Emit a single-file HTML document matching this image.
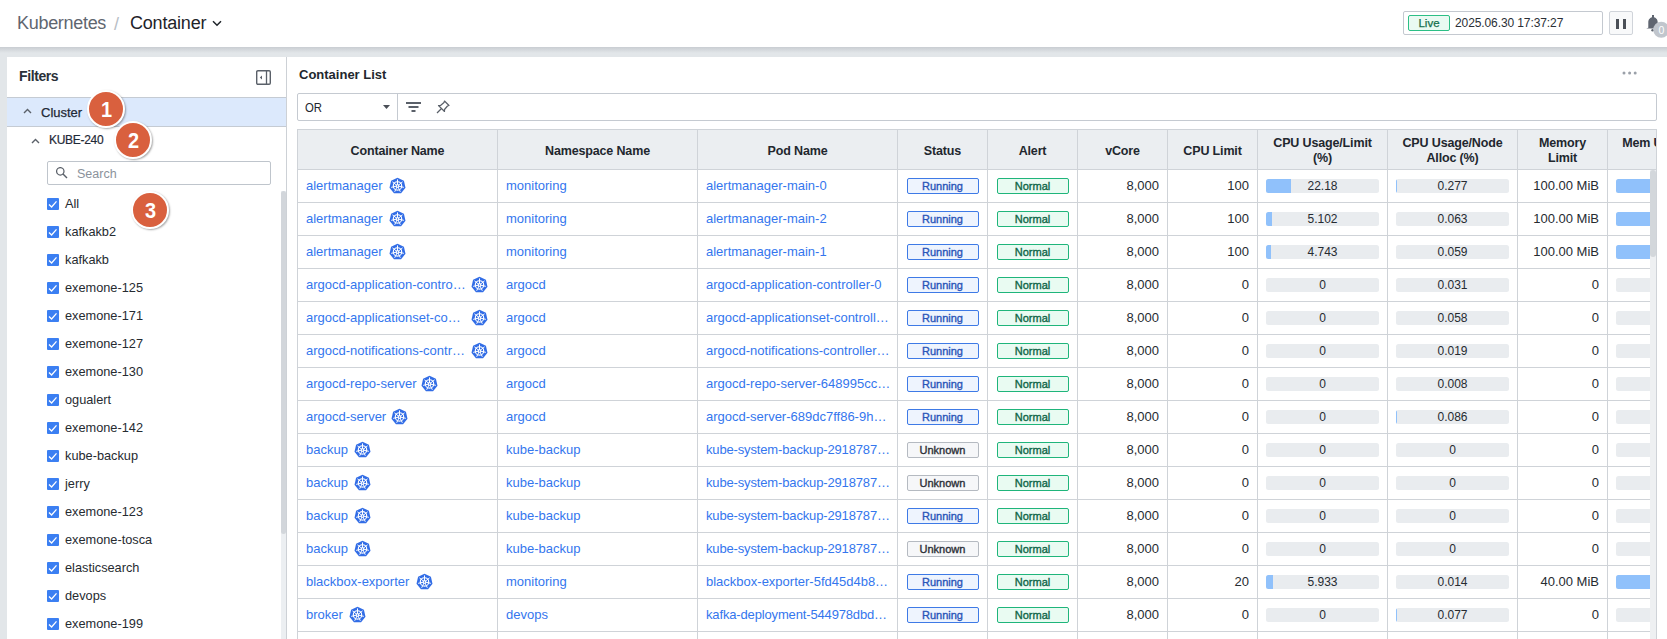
<!DOCTYPE html><html><head><meta charset="utf-8"><style>
*{box-sizing:border-box;margin:0;padding:0}
html,body{width:1667px;height:639px;overflow:hidden}
body{background:#e2e6e9;font-family:"Liberation Sans",sans-serif;color:#212529;position:relative}
.hdr{position:absolute;left:0;top:0;width:1667px;height:47px;background:#fff;box-shadow:0 1px 2px rgba(0,0,0,.12)}
.shadow{position:absolute;left:0;top:47px;width:1667px;height:6px;background:linear-gradient(#c9cdd2,#e2e6e9)}
.crumb1{position:absolute;left:17px;top:13px;font-size:18px;color:#5f6670;letter-spacing:-0.3px}
.crumbsep{position:absolute;left:114px;top:14px;font-size:18px;color:#b8bec6}
.crumb2{position:absolute;left:130px;top:13px;font-size:18px;color:#1e2329;letter-spacing:-0.2px}
.chev{position:absolute;left:212px;top:20px}
.timebox{position:absolute;left:1403px;top:11px;width:200px;height:24px;border:1px solid #c4c9d0;border-radius:2px;background:#fff}
.live{position:absolute;left:4px;top:3px;width:42px;height:16px;border:1px solid #2cbf86;border-radius:2px;background:#e9faf2;color:#15704d;font-size:11.5px;line-height:14px;text-align:center;-webkit-text-stroke:0.25px #15704d}
.date{position:absolute;left:51px;top:4px;font-size:12px;color:#2a2f36;line-height:14px;letter-spacing:-0.1px}
.pause{position:absolute;left:1609px;top:11px;width:24px;height:24px;border:1px solid #d0d4da;border-radius:2px;background:#f8f9fa}
.pause i{position:absolute;top:7px;width:3px;height:10px;background:#4a4f57}
.left{position:absolute;left:7px;top:57px;width:280px;height:582px;background:#fff;border-right:1px solid #cdd1d6}
.right{position:absolute;left:287px;top:57px;width:1380px;height:582px;background:#fff}
.ftitle{position:absolute;left:12px;top:11px;font-size:14px;letter-spacing:-0.4px;font-weight:bold;color:#2a3039}
.collapse{position:absolute;left:248.5px;top:12.5px}
.clrow{position:absolute;left:0;top:40px;width:279px;height:30px;background:#dce9fc;border-top:1px solid #c5cbd3;border-bottom:1px solid #c5cbd3}
.cltxt{position:absolute;left:34px;top:6.5px;font-size:13px;-webkit-text-stroke:0.25px #1f2a37;color:#1f2a37}
.kube{position:absolute;left:42px;top:76px;font-size:12px;color:#1f2a37;letter-spacing:-0.3px;-webkit-text-stroke:0.2px #1f2a37}
.search{position:absolute;left:40px;top:104px;width:224px;height:24px;border:1px solid #bfc5cc;border-radius:2px}
.search span{position:absolute;left:29px;top:5px;font-size:12.5px;color:#8b929b}
.cb{position:absolute;left:40px;width:12px;height:12px;background:#3b7ff2;border-radius:1px}
.cbl{position:absolute;left:58px;font-size:12.75px;color:#262b31}
.sbtrack{position:absolute;left:274px;top:134px;width:5px;height:448px;background:#eceff2}
.sbthumb{position:absolute;left:274px;top:134px;width:5px;height:343px;background:#d2d6db;border-radius:3px}
.badge{position:absolute;width:38px;height:38px;border-radius:50%;background:#d9603e;border:2.5px solid #fff;box-shadow:1px 1px 2px rgba(0,0,0,.35);color:#fff;font-weight:bold;font-size:21px;text-align:center;line-height:33px}
.badge span{display:inline-block;transform:translateX(0.8px) scale(0.95,1.08)}
.ctitle{position:absolute;left:12px;top:10px;font-size:13px;font-weight:bold;color:#22272e}
.dots{position:absolute;left:1335px;top:14px}
.fbar{position:absolute;left:10px;top:36px;width:1360px;height:28px;border:1px solid #c5cad1;border-radius:2px}
.ortxt{position:absolute;left:7px;top:6px;font-size:13px;color:#22272e;transform:scaleX(0.87);transform-origin:0 0}
.ordiv{position:absolute;left:99px;top:0;width:1px;height:26px;background:#c5cad1}
.tbl{position:absolute;left:10px;top:72px;width:1360px;height:510px;overflow:hidden;border-right:1px solid #cfd3d8}
table{border-collapse:collapse;table-layout:fixed;font-size:13px;width:1440px}
th{background:#ebeef1;border:1px solid #cfd3d8;height:40px;font-weight:bold;color:#22272e;font-size:12.5px;line-height:15px;text-align:center;padding:0 2px;letter-spacing:-0.15px}
td{border:1px solid #cfd3d8;height:33px;padding:0 8px 2px 8px;white-space:nowrap;overflow:hidden;position:relative;color:#262b31}
td.l{color:#3476ee}
td.r{text-align:right}
td.c{text-align:center;padding:0}
.k8s{position:absolute;top:7px}
.nm{display:inline-block;margin-right:6px}
th.nw{white-space:nowrap;text-align:left;padding-left:13px}
.st{display:inline-block;width:72px;height:16px;border:1px solid;border-radius:2px;font-size:11px;line-height:14px;text-align:center;vertical-align:middle;-webkit-text-stroke:0.35px currentColor}
.run{background:#eef4fe;border-color:#3e7ae6;color:#2a55b8}
.unk{background:#f6f7f9;border-color:#b5bac1;color:#2b2f36}
.nor{background:#e9fbf2;border-color:#1fb57b;color:#0f6647}
.bar{position:absolute;left:8px;top:8.5px;height:14px;background:#e9ecef;border-radius:2.5px;overflow:hidden;text-align:center;font-size:12px;line-height:14px;color:#262b31}
.bar i{position:absolute;left:0;top:0;height:14px;background:#90c1fb}
.bar b{position:relative;font-weight:normal}
.tsb{position:absolute;left:1363px;top:113px;width:6px;height:470px;background:#eef0f2}
.tsbt{position:absolute;left:1363px;top:113px;width:6px;height:87px;background:#d3d7db;border-radius:3px}
</style></head><body>
<div class="hdr">
<div class="crumb1">Kubernetes</div><div class="crumbsep">/</div><div class="crumb2">Container</div>
<svg class="chev" width="10" height="7" viewBox="0 0 10 7"><path d="M1 1.2 L5 5.2 L9 1.2" fill="none" stroke="#1e2329" stroke-width="1.5"/></svg>
<div class="timebox"><div class="live">Live</div><div class="date">2025.06.30 17:37:27</div></div>
<div class="pause"><i style="left:6px"></i><i style="left:13px"></i></div>
<svg style="position:absolute;left:1644px;top:13px" width="23" height="26" viewBox="0 0 23 26"><rect x="8" y="2" width="2" height="3" fill="#5f6570"/><path d="M4.3 14.8 V9.2 C4.3 6.2 6.3 4.2 9 4.2 C11.7 4.2 13.7 6.2 13.7 9.2 V14.8 L15.8 15.6 H2.2 Z" fill="#5f6570"/><circle cx="8.6" cy="17.3" r="1.3" fill="#5f6570"/><circle cx="17.25" cy="16.75" r="8" fill="#c1c6cd"/><text x="17.3" y="20.5" font-size="10.5" fill="#fff" text-anchor="middle" font-family="Liberation Sans">0</text></svg>
</div><div class="shadow"></div>
<div class="left">
<div class="ftitle">Filters</div>
<svg class="collapse" width="15" height="15" viewBox="0 0 15 15"><rect x="0.7" y="0.7" width="13.6" height="13.6" rx="1.2" fill="none" stroke="#5a6069" stroke-width="1.4"/><path d="M10.5 1 V14" stroke="#5a6069" stroke-width="1.3"/><path d="M6 5.6 L3.8 7.5 L6 9.4 Z" fill="#5a6069"/></svg>
<div class="clrow"><svg style="position:absolute;left:16px;top:10px" width="9" height="6" viewBox="0 0 9 6"><path d="M1 5 L4.5 1.5 L8 5" fill="none" stroke="#5a6069" stroke-width="1.4"/></svg><div class="cltxt">Cluster</div></div>
<svg style="position:absolute;left:24px;top:81px" width="9" height="6" viewBox="0 0 9 6"><path d="M1 5 L4.5 1.5 L8 5" fill="none" stroke="#5a6069" stroke-width="1.4"/></svg><div class="kube">KUBE-240</div>
<div class="search"><svg style="position:absolute;left:8px;top:5px" width="13" height="13" viewBox="0 0 13 13"><circle cx="4.3" cy="4.3" r="3.7" fill="none" stroke="#5a6069" stroke-width="1.25"/><path d="M7 7 L11 11.1" stroke="#5a6069" stroke-width="1.4"/></svg><span>Search</span></div>
<div class="cb" style="top:141px"><svg width="12" height="12" viewBox="0 0 12 12" style="position:absolute;left:0;top:0"><path d="M2 6.5 L4.6 9 L9.5 3.3" fill="none" stroke="#fff" stroke-width="1.3"/></svg></div><div class="cbl" style="top:139px">All</div>
<div class="cb" style="top:169px"><svg width="12" height="12" viewBox="0 0 12 12" style="position:absolute;left:0;top:0"><path d="M2 6.5 L4.6 9 L9.5 3.3" fill="none" stroke="#fff" stroke-width="1.3"/></svg></div><div class="cbl" style="top:167px">kafkakb2</div>
<div class="cb" style="top:197px"><svg width="12" height="12" viewBox="0 0 12 12" style="position:absolute;left:0;top:0"><path d="M2 6.5 L4.6 9 L9.5 3.3" fill="none" stroke="#fff" stroke-width="1.3"/></svg></div><div class="cbl" style="top:195px">kafkakb</div>
<div class="cb" style="top:225px"><svg width="12" height="12" viewBox="0 0 12 12" style="position:absolute;left:0;top:0"><path d="M2 6.5 L4.6 9 L9.5 3.3" fill="none" stroke="#fff" stroke-width="1.3"/></svg></div><div class="cbl" style="top:223px">exemone-125</div>
<div class="cb" style="top:253px"><svg width="12" height="12" viewBox="0 0 12 12" style="position:absolute;left:0;top:0"><path d="M2 6.5 L4.6 9 L9.5 3.3" fill="none" stroke="#fff" stroke-width="1.3"/></svg></div><div class="cbl" style="top:251px">exemone-171</div>
<div class="cb" style="top:281px"><svg width="12" height="12" viewBox="0 0 12 12" style="position:absolute;left:0;top:0"><path d="M2 6.5 L4.6 9 L9.5 3.3" fill="none" stroke="#fff" stroke-width="1.3"/></svg></div><div class="cbl" style="top:279px">exemone-127</div>
<div class="cb" style="top:309px"><svg width="12" height="12" viewBox="0 0 12 12" style="position:absolute;left:0;top:0"><path d="M2 6.5 L4.6 9 L9.5 3.3" fill="none" stroke="#fff" stroke-width="1.3"/></svg></div><div class="cbl" style="top:307px">exemone-130</div>
<div class="cb" style="top:337px"><svg width="12" height="12" viewBox="0 0 12 12" style="position:absolute;left:0;top:0"><path d="M2 6.5 L4.6 9 L9.5 3.3" fill="none" stroke="#fff" stroke-width="1.3"/></svg></div><div class="cbl" style="top:335px">ogualert</div>
<div class="cb" style="top:365px"><svg width="12" height="12" viewBox="0 0 12 12" style="position:absolute;left:0;top:0"><path d="M2 6.5 L4.6 9 L9.5 3.3" fill="none" stroke="#fff" stroke-width="1.3"/></svg></div><div class="cbl" style="top:363px">exemone-142</div>
<div class="cb" style="top:393px"><svg width="12" height="12" viewBox="0 0 12 12" style="position:absolute;left:0;top:0"><path d="M2 6.5 L4.6 9 L9.5 3.3" fill="none" stroke="#fff" stroke-width="1.3"/></svg></div><div class="cbl" style="top:391px">kube-backup</div>
<div class="cb" style="top:421px"><svg width="12" height="12" viewBox="0 0 12 12" style="position:absolute;left:0;top:0"><path d="M2 6.5 L4.6 9 L9.5 3.3" fill="none" stroke="#fff" stroke-width="1.3"/></svg></div><div class="cbl" style="top:419px">jerry</div>
<div class="cb" style="top:449px"><svg width="12" height="12" viewBox="0 0 12 12" style="position:absolute;left:0;top:0"><path d="M2 6.5 L4.6 9 L9.5 3.3" fill="none" stroke="#fff" stroke-width="1.3"/></svg></div><div class="cbl" style="top:447px">exemone-123</div>
<div class="cb" style="top:477px"><svg width="12" height="12" viewBox="0 0 12 12" style="position:absolute;left:0;top:0"><path d="M2 6.5 L4.6 9 L9.5 3.3" fill="none" stroke="#fff" stroke-width="1.3"/></svg></div><div class="cbl" style="top:475px">exemone-tosca</div>
<div class="cb" style="top:505px"><svg width="12" height="12" viewBox="0 0 12 12" style="position:absolute;left:0;top:0"><path d="M2 6.5 L4.6 9 L9.5 3.3" fill="none" stroke="#fff" stroke-width="1.3"/></svg></div><div class="cbl" style="top:503px">elasticsearch</div>
<div class="cb" style="top:533px"><svg width="12" height="12" viewBox="0 0 12 12" style="position:absolute;left:0;top:0"><path d="M2 6.5 L4.6 9 L9.5 3.3" fill="none" stroke="#fff" stroke-width="1.3"/></svg></div><div class="cbl" style="top:531px">devops</div>
<div class="cb" style="top:561px"><svg width="12" height="12" viewBox="0 0 12 12" style="position:absolute;left:0;top:0"><path d="M2 6.5 L4.6 9 L9.5 3.3" fill="none" stroke="#fff" stroke-width="1.3"/></svg></div><div class="cbl" style="top:559px">exemone-199</div>
<div class="sbtrack"></div><div class="sbthumb"></div>
</div>
<div class="right">
<div class="ctitle">Container List</div>
<svg class="dots" width="16" height="4" viewBox="0 0 16 4"><circle cx="2" cy="2" r="1.5" fill="#9ba1a9"/><circle cx="7.6" cy="2" r="1.5" fill="#9ba1a9"/><circle cx="13.2" cy="2" r="1.5" fill="#9ba1a9"/></svg>
<div class="fbar"><div class="ortxt">OR</div><svg style="position:absolute;left:85px;top:11px" width="7" height="4" viewBox="0 0 7 4"><path d="M0 0 H7 L3.5 4 Z" fill="#4a4f57"/></svg><div class="ordiv"></div>
<svg style="position:absolute;left:107px;top:7px" width="17" height="12" viewBox="0 0 17 12"><path d="M1 2 H16 M3.5 6 H13.5 M6.5 10 H10.5" stroke="#5a6069" stroke-width="1.8"/></svg>
<svg style="position:absolute;left:138px;top:6px" width="14" height="14" viewBox="0 0 14 14"><g fill="none" stroke="#5a6069" stroke-width="1.2" stroke-linejoin="round"><path d="M8.5 1 L13 5.5 L11.5 6 L8.5 9.5 L8.5 11.5 L2.5 5.5 L4.5 5.5 L8 2.5 Z"/><path d="M5.5 8.5 L1 13"/></g></svg>
</div>
<div class="tbl"><table><colgroup><col style="width:200px"><col style="width:200px"><col style="width:200px"><col style="width:90px"><col style="width:90px"><col style="width:90px"><col style="width:90px"><col style="width:130px"><col style="width:130px"><col style="width:90px"><col style="width:130px"></colgroup>
<tr><th style="padding-top:3px">Container Name</th><th style="padding-top:3px">Namespace Name</th><th style="padding-top:3px">Pod Name</th><th style="padding-top:3px">Status</th><th style="padding-top:3px">Alert</th><th style="padding-top:3px">vCore</th><th style="padding-top:3px">CPU Limit</th><th style="padding-top:2px">CPU Usage/Limit<br>(%)</th><th style="padding-top:2px">CPU Usage/Node<br>Alloc (%)</th><th style="padding-top:2px">Memory<br>Limit</th><th style="padding-top:2px">Mem Usage/Limit<br>(%)</th></tr>
<tr><td class="l"><span class="nm">alertmanager</span><svg class="k8s" style="left:90.5px" viewBox="0 0 17 17" width="17" height="17"><path d="M8.50 0.70 L14.91 3.79 L16.49 10.72 L12.06 16.29 L4.94 16.29 L0.51 10.72 L2.09 3.79 Z" fill="#326de6"/><g fill="none" stroke="#fff" stroke-linecap="round"><circle cx="8.5" cy="8.9" r="4.2" stroke-width="1.15"/><path stroke-width="1" d="M8.50 7.30 L8.50 2.80 M9.75 7.90 L13.27 5.10 M10.06 9.26 L14.45 10.26 M9.19 10.34 L11.15 14.40 M7.81 10.34 L5.85 14.40 M6.94 9.26 L2.55 10.26 M7.25 7.90 L3.73 5.10"/><circle cx="8.5" cy="8.9" r="1.3" stroke-width="1.1"/></g></svg></td><td class="l">monitoring</td><td class="l">alertmanager-main-0</td><td class="c"><span class="st run">Running</span></td><td class="c"><span class="st nor">Normal</span></td><td class="r">8,000</td><td class="r">100</td><td><div class="bar" style="width:113px"><i style="width:25.1px"></i><b>22.18</b></div></td><td><div class="bar" style="width:113px"><i style="width:1px"></i><b>0.277</b></div></td><td class="r">100.00 MiB</td><td><div class="bar" style="width:113px"><i style="width:60px"></i></div></td></tr>
<tr><td class="l"><span class="nm">alertmanager</span><svg class="k8s" style="left:90.5px" viewBox="0 0 17 17" width="17" height="17"><path d="M8.50 0.70 L14.91 3.79 L16.49 10.72 L12.06 16.29 L4.94 16.29 L0.51 10.72 L2.09 3.79 Z" fill="#326de6"/><g fill="none" stroke="#fff" stroke-linecap="round"><circle cx="8.5" cy="8.9" r="4.2" stroke-width="1.15"/><path stroke-width="1" d="M8.50 7.30 L8.50 2.80 M9.75 7.90 L13.27 5.10 M10.06 9.26 L14.45 10.26 M9.19 10.34 L11.15 14.40 M7.81 10.34 L5.85 14.40 M6.94 9.26 L2.55 10.26 M7.25 7.90 L3.73 5.10"/><circle cx="8.5" cy="8.9" r="1.3" stroke-width="1.1"/></g></svg></td><td class="l">monitoring</td><td class="l">alertmanager-main-2</td><td class="c"><span class="st run">Running</span></td><td class="c"><span class="st nor">Normal</span></td><td class="r">8,000</td><td class="r">100</td><td><div class="bar" style="width:113px"><i style="width:5.8px"></i><b>5.102</b></div></td><td><div class="bar" style="width:113px"><b>0.063</b></div></td><td class="r">100.00 MiB</td><td><div class="bar" style="width:113px"><i style="width:60px"></i></div></td></tr>
<tr><td class="l"><span class="nm">alertmanager</span><svg class="k8s" style="left:90.5px" viewBox="0 0 17 17" width="17" height="17"><path d="M8.50 0.70 L14.91 3.79 L16.49 10.72 L12.06 16.29 L4.94 16.29 L0.51 10.72 L2.09 3.79 Z" fill="#326de6"/><g fill="none" stroke="#fff" stroke-linecap="round"><circle cx="8.5" cy="8.9" r="4.2" stroke-width="1.15"/><path stroke-width="1" d="M8.50 7.30 L8.50 2.80 M9.75 7.90 L13.27 5.10 M10.06 9.26 L14.45 10.26 M9.19 10.34 L11.15 14.40 M7.81 10.34 L5.85 14.40 M6.94 9.26 L2.55 10.26 M7.25 7.90 L3.73 5.10"/><circle cx="8.5" cy="8.9" r="1.3" stroke-width="1.1"/></g></svg></td><td class="l">monitoring</td><td class="l">alertmanager-main-1</td><td class="c"><span class="st run">Running</span></td><td class="c"><span class="st nor">Normal</span></td><td class="r">8,000</td><td class="r">100</td><td><div class="bar" style="width:113px"><i style="width:5.4px"></i><b>4.743</b></div></td><td><div class="bar" style="width:113px"><b>0.059</b></div></td><td class="r">100.00 MiB</td><td><div class="bar" style="width:113px"><i style="width:60px"></i></div></td></tr>
<tr><td class="l"><span class="nm">argocd-application-contro…</span><svg class="k8s" style="left:172.5px" viewBox="0 0 17 17" width="17" height="17"><path d="M8.50 0.70 L14.91 3.79 L16.49 10.72 L12.06 16.29 L4.94 16.29 L0.51 10.72 L2.09 3.79 Z" fill="#326de6"/><g fill="none" stroke="#fff" stroke-linecap="round"><circle cx="8.5" cy="8.9" r="4.2" stroke-width="1.15"/><path stroke-width="1" d="M8.50 7.30 L8.50 2.80 M9.75 7.90 L13.27 5.10 M10.06 9.26 L14.45 10.26 M9.19 10.34 L11.15 14.40 M7.81 10.34 L5.85 14.40 M6.94 9.26 L2.55 10.26 M7.25 7.90 L3.73 5.10"/><circle cx="8.5" cy="8.9" r="1.3" stroke-width="1.1"/></g></svg></td><td class="l">argocd</td><td class="l">argocd-application-controller-0</td><td class="c"><span class="st run">Running</span></td><td class="c"><span class="st nor">Normal</span></td><td class="r">8,000</td><td class="r">0</td><td><div class="bar" style="width:113px"><i style="width:0.0px"></i><b>0</b></div></td><td><div class="bar" style="width:113px"><b>0.031</b></div></td><td class="r">0</td><td><div class="bar" style="width:113px"></div></td></tr>
<tr><td class="l"><span class="nm">argocd-applicationset-co…</span><svg class="k8s" style="left:172.5px" viewBox="0 0 17 17" width="17" height="17"><path d="M8.50 0.70 L14.91 3.79 L16.49 10.72 L12.06 16.29 L4.94 16.29 L0.51 10.72 L2.09 3.79 Z" fill="#326de6"/><g fill="none" stroke="#fff" stroke-linecap="round"><circle cx="8.5" cy="8.9" r="4.2" stroke-width="1.15"/><path stroke-width="1" d="M8.50 7.30 L8.50 2.80 M9.75 7.90 L13.27 5.10 M10.06 9.26 L14.45 10.26 M9.19 10.34 L11.15 14.40 M7.81 10.34 L5.85 14.40 M6.94 9.26 L2.55 10.26 M7.25 7.90 L3.73 5.10"/><circle cx="8.5" cy="8.9" r="1.3" stroke-width="1.1"/></g></svg></td><td class="l">argocd</td><td class="l">argocd-applicationset-controll…</td><td class="c"><span class="st run">Running</span></td><td class="c"><span class="st nor">Normal</span></td><td class="r">8,000</td><td class="r">0</td><td><div class="bar" style="width:113px"><i style="width:0.0px"></i><b>0</b></div></td><td><div class="bar" style="width:113px"><b>0.058</b></div></td><td class="r">0</td><td><div class="bar" style="width:113px"></div></td></tr>
<tr><td class="l"><span class="nm">argocd-notifications-contr…</span><svg class="k8s" style="left:172.5px" viewBox="0 0 17 17" width="17" height="17"><path d="M8.50 0.70 L14.91 3.79 L16.49 10.72 L12.06 16.29 L4.94 16.29 L0.51 10.72 L2.09 3.79 Z" fill="#326de6"/><g fill="none" stroke="#fff" stroke-linecap="round"><circle cx="8.5" cy="8.9" r="4.2" stroke-width="1.15"/><path stroke-width="1" d="M8.50 7.30 L8.50 2.80 M9.75 7.90 L13.27 5.10 M10.06 9.26 L14.45 10.26 M9.19 10.34 L11.15 14.40 M7.81 10.34 L5.85 14.40 M6.94 9.26 L2.55 10.26 M7.25 7.90 L3.73 5.10"/><circle cx="8.5" cy="8.9" r="1.3" stroke-width="1.1"/></g></svg></td><td class="l">argocd</td><td class="l">argocd-notifications-controller…</td><td class="c"><span class="st run">Running</span></td><td class="c"><span class="st nor">Normal</span></td><td class="r">8,000</td><td class="r">0</td><td><div class="bar" style="width:113px"><i style="width:0.0px"></i><b>0</b></div></td><td><div class="bar" style="width:113px"><b>0.019</b></div></td><td class="r">0</td><td><div class="bar" style="width:113px"></div></td></tr>
<tr><td class="l"><span class="nm">argocd-repo-server</span><svg class="k8s" style="left:122.5px" viewBox="0 0 17 17" width="17" height="17"><path d="M8.50 0.70 L14.91 3.79 L16.49 10.72 L12.06 16.29 L4.94 16.29 L0.51 10.72 L2.09 3.79 Z" fill="#326de6"/><g fill="none" stroke="#fff" stroke-linecap="round"><circle cx="8.5" cy="8.9" r="4.2" stroke-width="1.15"/><path stroke-width="1" d="M8.50 7.30 L8.50 2.80 M9.75 7.90 L13.27 5.10 M10.06 9.26 L14.45 10.26 M9.19 10.34 L11.15 14.40 M7.81 10.34 L5.85 14.40 M6.94 9.26 L2.55 10.26 M7.25 7.90 L3.73 5.10"/><circle cx="8.5" cy="8.9" r="1.3" stroke-width="1.1"/></g></svg></td><td class="l">argocd</td><td class="l">argocd-repo-server-648995cc…</td><td class="c"><span class="st run">Running</span></td><td class="c"><span class="st nor">Normal</span></td><td class="r">8,000</td><td class="r">0</td><td><div class="bar" style="width:113px"><i style="width:0.0px"></i><b>0</b></div></td><td><div class="bar" style="width:113px"><b>0.008</b></div></td><td class="r">0</td><td><div class="bar" style="width:113px"></div></td></tr>
<tr><td class="l"><span class="nm">argocd-server</span><svg class="k8s" style="left:93.0px" viewBox="0 0 17 17" width="17" height="17"><path d="M8.50 0.70 L14.91 3.79 L16.49 10.72 L12.06 16.29 L4.94 16.29 L0.51 10.72 L2.09 3.79 Z" fill="#326de6"/><g fill="none" stroke="#fff" stroke-linecap="round"><circle cx="8.5" cy="8.9" r="4.2" stroke-width="1.15"/><path stroke-width="1" d="M8.50 7.30 L8.50 2.80 M9.75 7.90 L13.27 5.10 M10.06 9.26 L14.45 10.26 M9.19 10.34 L11.15 14.40 M7.81 10.34 L5.85 14.40 M6.94 9.26 L2.55 10.26 M7.25 7.90 L3.73 5.10"/><circle cx="8.5" cy="8.9" r="1.3" stroke-width="1.1"/></g></svg></td><td class="l">argocd</td><td class="l">argocd-server-689dc7ff86-9h…</td><td class="c"><span class="st run">Running</span></td><td class="c"><span class="st nor">Normal</span></td><td class="r">8,000</td><td class="r">0</td><td><div class="bar" style="width:113px"><i style="width:0.0px"></i><b>0</b></div></td><td><div class="bar" style="width:113px"><i style="width:1px"></i><b>0.086</b></div></td><td class="r">0</td><td><div class="bar" style="width:113px"></div></td></tr>
<tr><td class="l"><span class="nm">backup</span><svg class="k8s" style="left:55.8px" viewBox="0 0 17 17" width="17" height="17"><path d="M8.50 0.70 L14.91 3.79 L16.49 10.72 L12.06 16.29 L4.94 16.29 L0.51 10.72 L2.09 3.79 Z" fill="#326de6"/><g fill="none" stroke="#fff" stroke-linecap="round"><circle cx="8.5" cy="8.9" r="4.2" stroke-width="1.15"/><path stroke-width="1" d="M8.50 7.30 L8.50 2.80 M9.75 7.90 L13.27 5.10 M10.06 9.26 L14.45 10.26 M9.19 10.34 L11.15 14.40 M7.81 10.34 L5.85 14.40 M6.94 9.26 L2.55 10.26 M7.25 7.90 L3.73 5.10"/><circle cx="8.5" cy="8.9" r="1.3" stroke-width="1.1"/></g></svg></td><td class="l">kube-backup</td><td class="l" style="letter-spacing:-0.15px">kube-system-backup-2918787…</td><td class="c"><span class="st unk">Unknown</span></td><td class="c"><span class="st nor">Normal</span></td><td class="r">8,000</td><td class="r">0</td><td><div class="bar" style="width:113px"><i style="width:0.0px"></i><b>0</b></div></td><td><div class="bar" style="width:113px"><b>0</b></div></td><td class="r">0</td><td><div class="bar" style="width:113px"></div></td></tr>
<tr><td class="l"><span class="nm">backup</span><svg class="k8s" style="left:55.8px" viewBox="0 0 17 17" width="17" height="17"><path d="M8.50 0.70 L14.91 3.79 L16.49 10.72 L12.06 16.29 L4.94 16.29 L0.51 10.72 L2.09 3.79 Z" fill="#326de6"/><g fill="none" stroke="#fff" stroke-linecap="round"><circle cx="8.5" cy="8.9" r="4.2" stroke-width="1.15"/><path stroke-width="1" d="M8.50 7.30 L8.50 2.80 M9.75 7.90 L13.27 5.10 M10.06 9.26 L14.45 10.26 M9.19 10.34 L11.15 14.40 M7.81 10.34 L5.85 14.40 M6.94 9.26 L2.55 10.26 M7.25 7.90 L3.73 5.10"/><circle cx="8.5" cy="8.9" r="1.3" stroke-width="1.1"/></g></svg></td><td class="l">kube-backup</td><td class="l" style="letter-spacing:-0.15px">kube-system-backup-2918787…</td><td class="c"><span class="st unk">Unknown</span></td><td class="c"><span class="st nor">Normal</span></td><td class="r">8,000</td><td class="r">0</td><td><div class="bar" style="width:113px"><i style="width:0.0px"></i><b>0</b></div></td><td><div class="bar" style="width:113px"><b>0</b></div></td><td class="r">0</td><td><div class="bar" style="width:113px"></div></td></tr>
<tr><td class="l"><span class="nm">backup</span><svg class="k8s" style="left:55.8px" viewBox="0 0 17 17" width="17" height="17"><path d="M8.50 0.70 L14.91 3.79 L16.49 10.72 L12.06 16.29 L4.94 16.29 L0.51 10.72 L2.09 3.79 Z" fill="#326de6"/><g fill="none" stroke="#fff" stroke-linecap="round"><circle cx="8.5" cy="8.9" r="4.2" stroke-width="1.15"/><path stroke-width="1" d="M8.50 7.30 L8.50 2.80 M9.75 7.90 L13.27 5.10 M10.06 9.26 L14.45 10.26 M9.19 10.34 L11.15 14.40 M7.81 10.34 L5.85 14.40 M6.94 9.26 L2.55 10.26 M7.25 7.90 L3.73 5.10"/><circle cx="8.5" cy="8.9" r="1.3" stroke-width="1.1"/></g></svg></td><td class="l">kube-backup</td><td class="l" style="letter-spacing:-0.15px">kube-system-backup-2918787…</td><td class="c"><span class="st run">Running</span></td><td class="c"><span class="st nor">Normal</span></td><td class="r">8,000</td><td class="r">0</td><td><div class="bar" style="width:113px"><i style="width:0.0px"></i><b>0</b></div></td><td><div class="bar" style="width:113px"><b>0</b></div></td><td class="r">0</td><td><div class="bar" style="width:113px"></div></td></tr>
<tr><td class="l"><span class="nm">backup</span><svg class="k8s" style="left:55.8px" viewBox="0 0 17 17" width="17" height="17"><path d="M8.50 0.70 L14.91 3.79 L16.49 10.72 L12.06 16.29 L4.94 16.29 L0.51 10.72 L2.09 3.79 Z" fill="#326de6"/><g fill="none" stroke="#fff" stroke-linecap="round"><circle cx="8.5" cy="8.9" r="4.2" stroke-width="1.15"/><path stroke-width="1" d="M8.50 7.30 L8.50 2.80 M9.75 7.90 L13.27 5.10 M10.06 9.26 L14.45 10.26 M9.19 10.34 L11.15 14.40 M7.81 10.34 L5.85 14.40 M6.94 9.26 L2.55 10.26 M7.25 7.90 L3.73 5.10"/><circle cx="8.5" cy="8.9" r="1.3" stroke-width="1.1"/></g></svg></td><td class="l">kube-backup</td><td class="l" style="letter-spacing:-0.15px">kube-system-backup-2918787…</td><td class="c"><span class="st unk">Unknown</span></td><td class="c"><span class="st nor">Normal</span></td><td class="r">8,000</td><td class="r">0</td><td><div class="bar" style="width:113px"><i style="width:0.0px"></i><b>0</b></div></td><td><div class="bar" style="width:113px"><b>0</b></div></td><td class="r">0</td><td><div class="bar" style="width:113px"></div></td></tr>
<tr><td class="l"><span class="nm">blackbox-exporter</span><svg class="k8s" style="left:117.8px" viewBox="0 0 17 17" width="17" height="17"><path d="M8.50 0.70 L14.91 3.79 L16.49 10.72 L12.06 16.29 L4.94 16.29 L0.51 10.72 L2.09 3.79 Z" fill="#326de6"/><g fill="none" stroke="#fff" stroke-linecap="round"><circle cx="8.5" cy="8.9" r="4.2" stroke-width="1.15"/><path stroke-width="1" d="M8.50 7.30 L8.50 2.80 M9.75 7.90 L13.27 5.10 M10.06 9.26 L14.45 10.26 M9.19 10.34 L11.15 14.40 M7.81 10.34 L5.85 14.40 M6.94 9.26 L2.55 10.26 M7.25 7.90 L3.73 5.10"/><circle cx="8.5" cy="8.9" r="1.3" stroke-width="1.1"/></g></svg></td><td class="l">monitoring</td><td class="l">blackbox-exporter-5fd45d4b8…</td><td class="c"><span class="st run">Running</span></td><td class="c"><span class="st nor">Normal</span></td><td class="r">8,000</td><td class="r">20</td><td><div class="bar" style="width:113px"><i style="width:6.7px"></i><b>5.933</b></div></td><td><div class="bar" style="width:113px"><b>0.014</b></div></td><td class="r">40.00 MiB</td><td><div class="bar" style="width:113px"><i style="width:60px"></i></div></td></tr>
<tr><td class="l"><span class="nm">broker</span><svg class="k8s" style="left:50.5px" viewBox="0 0 17 17" width="17" height="17"><path d="M8.50 0.70 L14.91 3.79 L16.49 10.72 L12.06 16.29 L4.94 16.29 L0.51 10.72 L2.09 3.79 Z" fill="#326de6"/><g fill="none" stroke="#fff" stroke-linecap="round"><circle cx="8.5" cy="8.9" r="4.2" stroke-width="1.15"/><path stroke-width="1" d="M8.50 7.30 L8.50 2.80 M9.75 7.90 L13.27 5.10 M10.06 9.26 L14.45 10.26 M9.19 10.34 L11.15 14.40 M7.81 10.34 L5.85 14.40 M6.94 9.26 L2.55 10.26 M7.25 7.90 L3.73 5.10"/><circle cx="8.5" cy="8.9" r="1.3" stroke-width="1.1"/></g></svg></td><td class="l">devops</td><td class="l" style="letter-spacing:-0.15px">kafka-deployment-544978dbd…</td><td class="c"><span class="st run">Running</span></td><td class="c"><span class="st nor">Normal</span></td><td class="r">8,000</td><td class="r">0</td><td><div class="bar" style="width:113px"><i style="width:0.0px"></i><b>0</b></div></td><td><div class="bar" style="width:113px"><i style="width:1px"></i><b>0.077</b></div></td><td class="r">0</td><td><div class="bar" style="width:113px"></div></td></tr>
<tr><td></td><td></td><td></td><td></td><td></td><td></td><td></td><td></td><td></td><td></td><td></td></tr>
</table></div>
<div class="tsb"></div><div class="tsbt"></div>
</div>
<div class="badge" style="left:87px;top:90px"><span>1</span></div>
<div class="badge" style="left:114px;top:121px"><span>2</span></div>
<div class="badge" style="left:131px;top:191px"><span>3</span></div>
</body></html>
